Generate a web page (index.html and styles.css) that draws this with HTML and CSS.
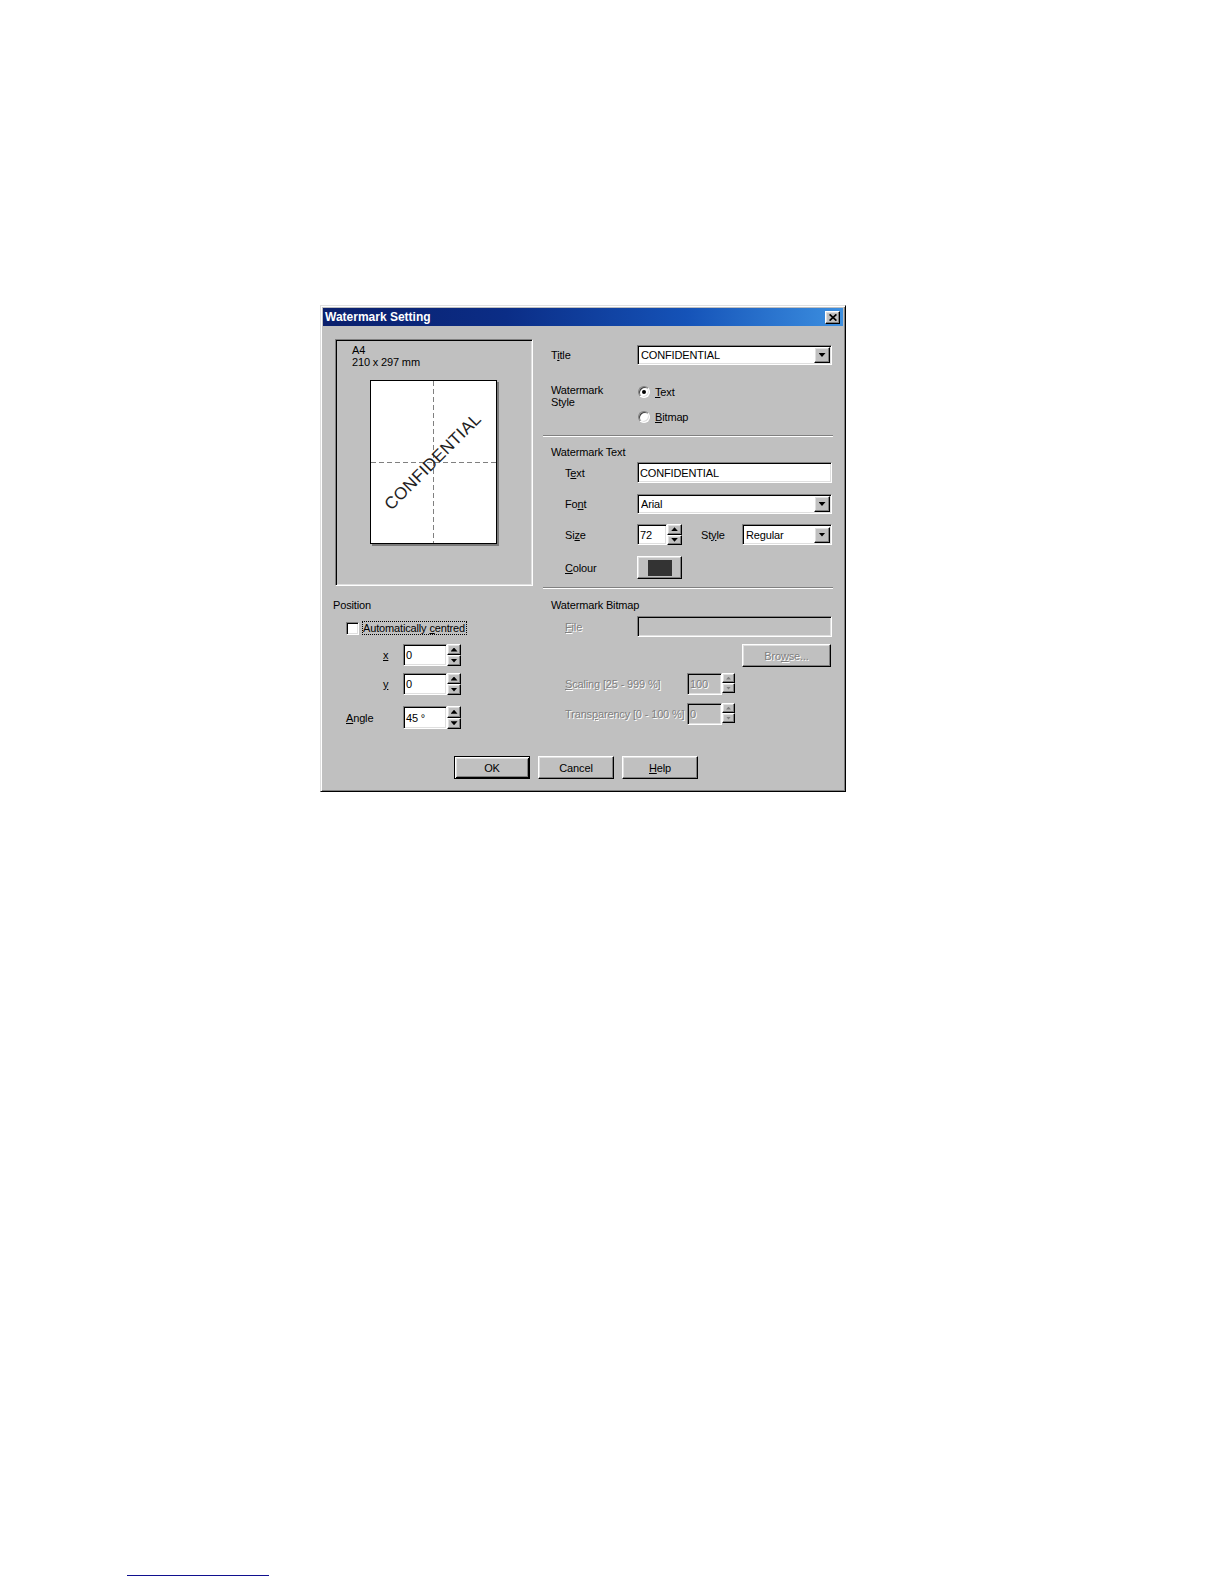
FILE: index.html
```html
<!DOCTYPE html>
<html lang="en">
<head>
<meta charset="utf-8">
<title>Watermark Setting</title>
<link rel="stylesheet" href="styles.css">
</head>
<body>
<div class="page">
  <div class="dialog">
    <div class="titlebar">
      <span class="title-text">Watermark Setting</span>
      <span class="close-btn raised">
        <svg width="8" height="7" viewBox="0 0 8 7"><path d="M0.6 0.4 L7.4 6.6 M7.4 0.4 L0.6 6.6" stroke="#000" stroke-width="1.7" fill="none"/></svg>
      </span>
    </div>
    <div class="dlg-body">
      <div class="main">
        <div class="left-col">
          <div class="preview sunken">
            <div class="paper-info">A4<br>210 x 297 mm</div>
            <div class="paper">
              <span class="wm-text">CONFIDENTIAL</span>
            </div>
          </div>
          <div class="group-label">Position</div>
          <div class="check-row">
            <span class="checkbox sunken"></span>
            <span class="focus-label">Automatically <u>c</u>entred</span>
          </div>
          <div class="spin-row spin-row--x">
            <span class="pos-label pos-label--axis"><u>x</u></span>
            <span class="edit sunken edit-pos">0</span>
            <span class="spinner">
              <span class="spin-btn raised"><i class="tri-up"></i></span>
              <span class="spin-btn raised"><i class="tri-down"></i></span>
            </span>
          </div>
          <div class="spin-row spin-row--y">
            <span class="pos-label pos-label--axis"><u>y</u></span>
            <span class="edit sunken edit-pos">0</span>
            <span class="spinner">
              <span class="spin-btn raised"><i class="tri-up"></i></span>
              <span class="spin-btn raised"><i class="tri-down"></i></span>
            </span>
          </div>
          <div class="spin-row spin-row--angle">
            <span class="pos-label"><u>A</u>ngle</span>
            <span class="edit sunken edit-pos">45 °</span>
            <span class="spinner">
              <span class="spin-btn raised"><i class="tri-up"></i></span>
              <span class="spin-btn raised"><i class="tri-down"></i></span>
            </span>
          </div>
        </div>

        <div class="right-col">
          <div class="row row-title">
            <span class="lbl lbl-main">T<u>i</u>tle</span>
            <div class="combo sunken combo-wide">
              <span class="combo-val">CONFIDENTIAL</span>
              <span class="drop-btn raised"><i class="tri-down"></i></span>
            </div>
          </div>
          <div class="row row-style">
            <span class="lbl lbl-main lbl-two">Watermark<br>Style</span>
            <div class="radios">
              <div class="radio-item"><span class="radio radio--on"></span><span class="radio-text"><u>T</u>ext</span></div>
              <div class="radio-item"><span class="radio"></span><span class="radio-text"><u>B</u>itmap</span></div>
            </div>
          </div>
          <div class="sep sep-1"></div>
          <div class="heading heading-text">Watermark Text</div>
          <div class="row row-text">
            <span class="lbl lbl-sub">T<u>e</u>xt</span>
            <span class="edit sunken edit-wide">CONFIDENTIAL</span>
          </div>
          <div class="row row-font">
            <span class="lbl lbl-sub">Fo<u>n</u>t</span>
            <div class="combo sunken combo-wide">
              <span class="combo-val">Arial</span>
              <span class="drop-btn raised"><i class="tri-down"></i></span>
            </div>
          </div>
          <div class="row row-size">
            <span class="lbl lbl-sub">Si<u>z</u>e</span>
            <span class="edit sunken edit-size">72</span>
            <span class="spinner spinner-size">
              <span class="spin-btn raised"><i class="tri-up"></i></span>
              <span class="spin-btn raised"><i class="tri-down"></i></span>
            </span>
            <span class="lbl-style">St<u>y</u>le</span>
            <div class="combo sunken combo-style">
              <span class="combo-val">Regular</span>
              <span class="drop-btn raised"><i class="tri-down"></i></span>
            </div>
          </div>
          <div class="row row-colour">
            <span class="lbl lbl-sub"><u>C</u>olour</span>
            <span class="btn-colour raised"><span class="swatch"></span></span>
          </div>
          <div class="sep sep-2"></div>
          <div class="heading heading-bitmap">Watermark Bitmap</div>
          <div class="row row-file">
            <span class="lbl lbl-sub disabled"><u>F</u>ile</span>
            <span class="edit sunken edit-wide edit--disabled"></span>
          </div>
          <div class="row row-browse">
            <span class="btn-browse raised disabled">Bro<u>w</u>se...</span>
          </div>
          <div class="row row-scale">
            <span class="lbl lbl-sub lbl-long disabled"><u>S</u>caling [25 - 999 %]</span>
            <span class="edit sunken edit-small edit--disabled">100</span>
            <span class="spinner spinner-small spinner--disabled">
              <span class="spin-btn raised"><i class="tri-up"></i></span>
              <span class="spin-btn raised"><i class="tri-down"></i></span>
            </span>
          </div>
          <div class="row row-trans">
            <span class="lbl lbl-sub lbl-long disabled">Trans<u>p</u>arency [0 - 100 %]</span>
            <span class="edit sunken edit-small edit--disabled">0</span>
            <span class="spinner spinner-small spinner--disabled">
              <span class="spin-btn raised"><i class="tri-up"></i></span>
              <span class="spin-btn raised"><i class="tri-down"></i></span>
            </span>
          </div>
        </div>
      </div>

      <div class="buttons">
        <span class="btn raised btn--default">OK</span>
        <span class="btn raised">Cancel</span>
        <span class="btn raised"><u>H</u>elp</span>
      </div>
    </div>
  </div>
  <div class="footline"></div>
</div>
</body>
</html>
```

FILE: styles.css
```css
* { box-sizing: border-box; }

body {
  margin: 0;
  background: #fff;
  font-family: "Liberation Sans", Arial, sans-serif;
  font-size: 11px;
  letter-spacing: -0.15px;
  color: #000;
}

u { text-decoration: underline; text-underline-offset: 1px; }

.page { padding-top: 305px; }

/* generic 3D borders */
.raised {
  background: #c0c0c0;
  border: 1px solid;
  border-color: #fff #000 #000 #fff;
  box-shadow: inset -1px -1px #808080, inset 1px 1px #dfdfdf;
}
.sunken {
  border: 1px solid;
  border-color: #808080 #fff #fff #808080;
  box-shadow: inset 1px 1px #000, inset -1px -1px #dfdfdf;
}
.disabled {
  color: #808080;
  text-shadow: 1px 1px 0 #fff;
}

/* dialog frame */
.dialog {
  margin-left: 320px;
  width: 526px;
  height: 487px;
  background: #c0c0c0;
  border: 1px solid;
  border-color: #dfdfdf #000 #000 #dfdfdf;
  box-shadow: inset 1px 1px #fff, inset -1px -1px #808080;
  padding: 2px;
}

.titlebar {
  height: 18px;
  display: flex;
  align-items: center;
  justify-content: space-between;
  padding: 0 3px 0 2px;
  background: linear-gradient(90deg, #0a1f6c 0%, #0b2d86 35%, #1553b8 70%, #3c8fe0 100%);
}
.title-text {
  font-family: "Liberation Sans", Arial, sans-serif;
  font-weight: bold;
  font-size: 12px;
  letter-spacing: 0;
  color: #fff;
}
.close-btn {
  width: 15px;
  height: 13px;
  display: flex;
  align-items: center;
  justify-content: center;
}

.dlg-body { padding: 13px 0 0 10px; }
.main { display: flex; gap: 10px; }
.left-col { width: 200px; }
.right-col { width: 290px; }

/* preview */
.preview {
  margin-left: 2px;
  width: 198px;
  height: 247px;
  padding: 4px 0 0 16px;
}
.paper-info { line-height: 12px; }
.paper {
  margin: 12px 0 0 18px;
  width: 127px;
  height: 164px;
  border: 1px solid #000;
  box-shadow: 2px 2px 0 #7a7a7a;
  background:
    repeating-linear-gradient(to bottom, #808080 0 5px, transparent 5px 8px) 62px 0 / 1px 100% no-repeat,
    repeating-linear-gradient(to right, #808080 0 5px, transparent 5px 8px) 0 81px / 100% 1px no-repeat,
    #fff;
  display: flex;
  align-items: center;
  justify-content: center;
}
.wm-text {
  font-family: "Liberation Sans", Arial, sans-serif;
  font-size: 17px;
  letter-spacing: 0.3px;
  color: #1e1e1e;
  white-space: nowrap;
  transform: rotate(-45deg);
}

/* position group */
.group-label { margin-top: 12px; line-height: 14px; }
.check-row {
  margin-top: 8px;
  height: 16px;
  display: flex;
  align-items: center;
  padding-left: 13px;
}
.checkbox { width: 13px; height: 13px; background: #fff; }
.focus-label {
  margin-left: 3px;
  border: 1px dotted #000;
  padding: 0 1px 0 0;
  line-height: 12px;
}
.spin-row {
  display: flex;
  align-items: center;
  padding-left: 13px;
  height: 22px;
}
.spin-row--x { margin-top: 8px; }
.spin-row--y { margin-top: 7px; }
.spin-row--angle { margin-top: 11px; height: 23px; }
.pos-label { width: 57px; flex-shrink: 0; }
.pos-label--axis { padding-left: 37px; }

/* edits */
.edit {
  background: #fff;
  padding: 0 2px;
  display: flex;
  align-items: center;
  white-space: nowrap;
  overflow: hidden;
  height: 100%;
}
.edit--disabled {
  background: #c0c0c0;
  color: #808080;
  text-shadow: 1px 1px 0 #fff;
}
.edit-pos { width: 44px; }
.edit-wide { width: 195px; }
.edit-size { width: 30px; }
.edit-small { width: 35px; }

/* spinner */
.spinner {
  width: 14px;
  height: 100%;
  display: flex;
  flex-direction: column;
}
.spinner-size { width: 15px; }
.spinner-small { width: 13px; height: 20px; align-self: flex-start; }
.spin-btn {
  flex: 1;
  display: flex;
  align-items: center;
  justify-content: center;
}
.tri-up, .tri-down {
  display: block;
  width: 7px;
  height: 4px;
  background: #000;
}
.tri-up { clip-path: polygon(50% 0, 100% 100%, 0 100%); }
.tri-down { clip-path: polygon(0 0, 100% 0, 50% 100%); }
.spinner--disabled .tri-up,
.spinner--disabled .tri-down {
  width: 5px;
  height: 3px;
  background: #808080;
}

/* right column */
.row { display: flex; align-items: center; }
.lbl { width: 94px; flex-shrink: 0; white-space: nowrap; }
.lbl-main { padding-left: 8px; }
.lbl-sub { padding-left: 22px; }
.lbl-long { width: 144px; }
.lbl-two { line-height: 12px; align-self: flex-start; padding-top: 1px; }

.row-title { margin-top: 6px; height: 20px; }
.row-style { margin-top: 18px; height: 43px; align-items: flex-start; }
.radios { display: flex; flex-direction: column; gap: 7px; }
.radio-item { height: 18px; display: flex; align-items: center; padding-left: 1px; }
.radio {
  width: 12px;
  height: 12px;
  border-radius: 50%;
  background: #fff;
  border: 1px solid;
  border-color: #808080 #fff #fff #808080;
  box-shadow: inset 1px 1px #404040, inset -1px -1px #dfdfdf;
  display: flex;
  align-items: center;
  justify-content: center;
}
.radio--on::after {
  content: "";
  width: 4px;
  height: 4px;
  border-radius: 50%;
  background: #000;
}
.radio-text { margin-left: 5px; }

.sep {
  height: 2px;
  border-top: 1px solid #808080;
  border-bottom: 1px solid #fff;
}
.sep-1 { margin-top: 9px; }
.sep-2 { margin-top: 8px; }

.heading { line-height: 13px; padding-left: 8px; }
.heading-text { margin-top: 9px; }
.heading-bitmap { margin-top: 10px; }

.row-text { margin-top: 3px; height: 21px; }
.row-font { margin-top: 11px; height: 20px; }
.row-size { margin-top: 10px; height: 21px; }
.row-colour { margin-top: 11px; height: 23px; }
.row-file { margin-top: 4px; height: 21px; }
.row-browse { margin-top: 7px; height: 23px; justify-content: flex-end; }
.row-scale { margin-top: 6px; height: 22px; }
.row-trans { margin-top: 8px; height: 22px; }

.combo {
  display: flex;
  align-items: center;
  background: #fff;
  padding: 1px 1px 1px 3px;
  height: 100%;
}
.combo-wide { width: 195px; }
.combo-style { width: 90px; }
.combo-val { flex: 1; white-space: nowrap; overflow: hidden; }
.drop-btn {
  width: 16px;
  height: 16px;
  display: flex;
  align-items: center;
  justify-content: center;
  flex-shrink: 0;
}

.lbl-style { margin-left: 19px; width: 41px; flex-shrink: 0; }

.btn-colour {
  width: 45px;
  height: 23px;
  display: flex;
  align-items: center;
  justify-content: center;
}
.swatch { width: 24px; height: 16px; background: #333; }

.btn-browse {
  width: 89px;
  height: 23px;
  margin-right: 2px;
  display: flex;
  align-items: center;
  justify-content: center;
}

/* bottom buttons */
.buttons {
  margin-top: 27px;
  padding-left: 121px;
  display: flex;
  gap: 8px;
}
.btn {
  width: 76px;
  height: 23px;
  display: flex;
  align-items: center;
  justify-content: center;
}
.btn--default {
  border: 1px solid #000;
  box-shadow: inset 1px 1px #fff, inset -1px -1px #000, inset 2px 2px #dfdfdf, inset -2px -2px #808080;
}

.footline {
  margin: 783px 0 0 127px;
  width: 142px;
  height: 1px;
  background: #10108f;
}
```
